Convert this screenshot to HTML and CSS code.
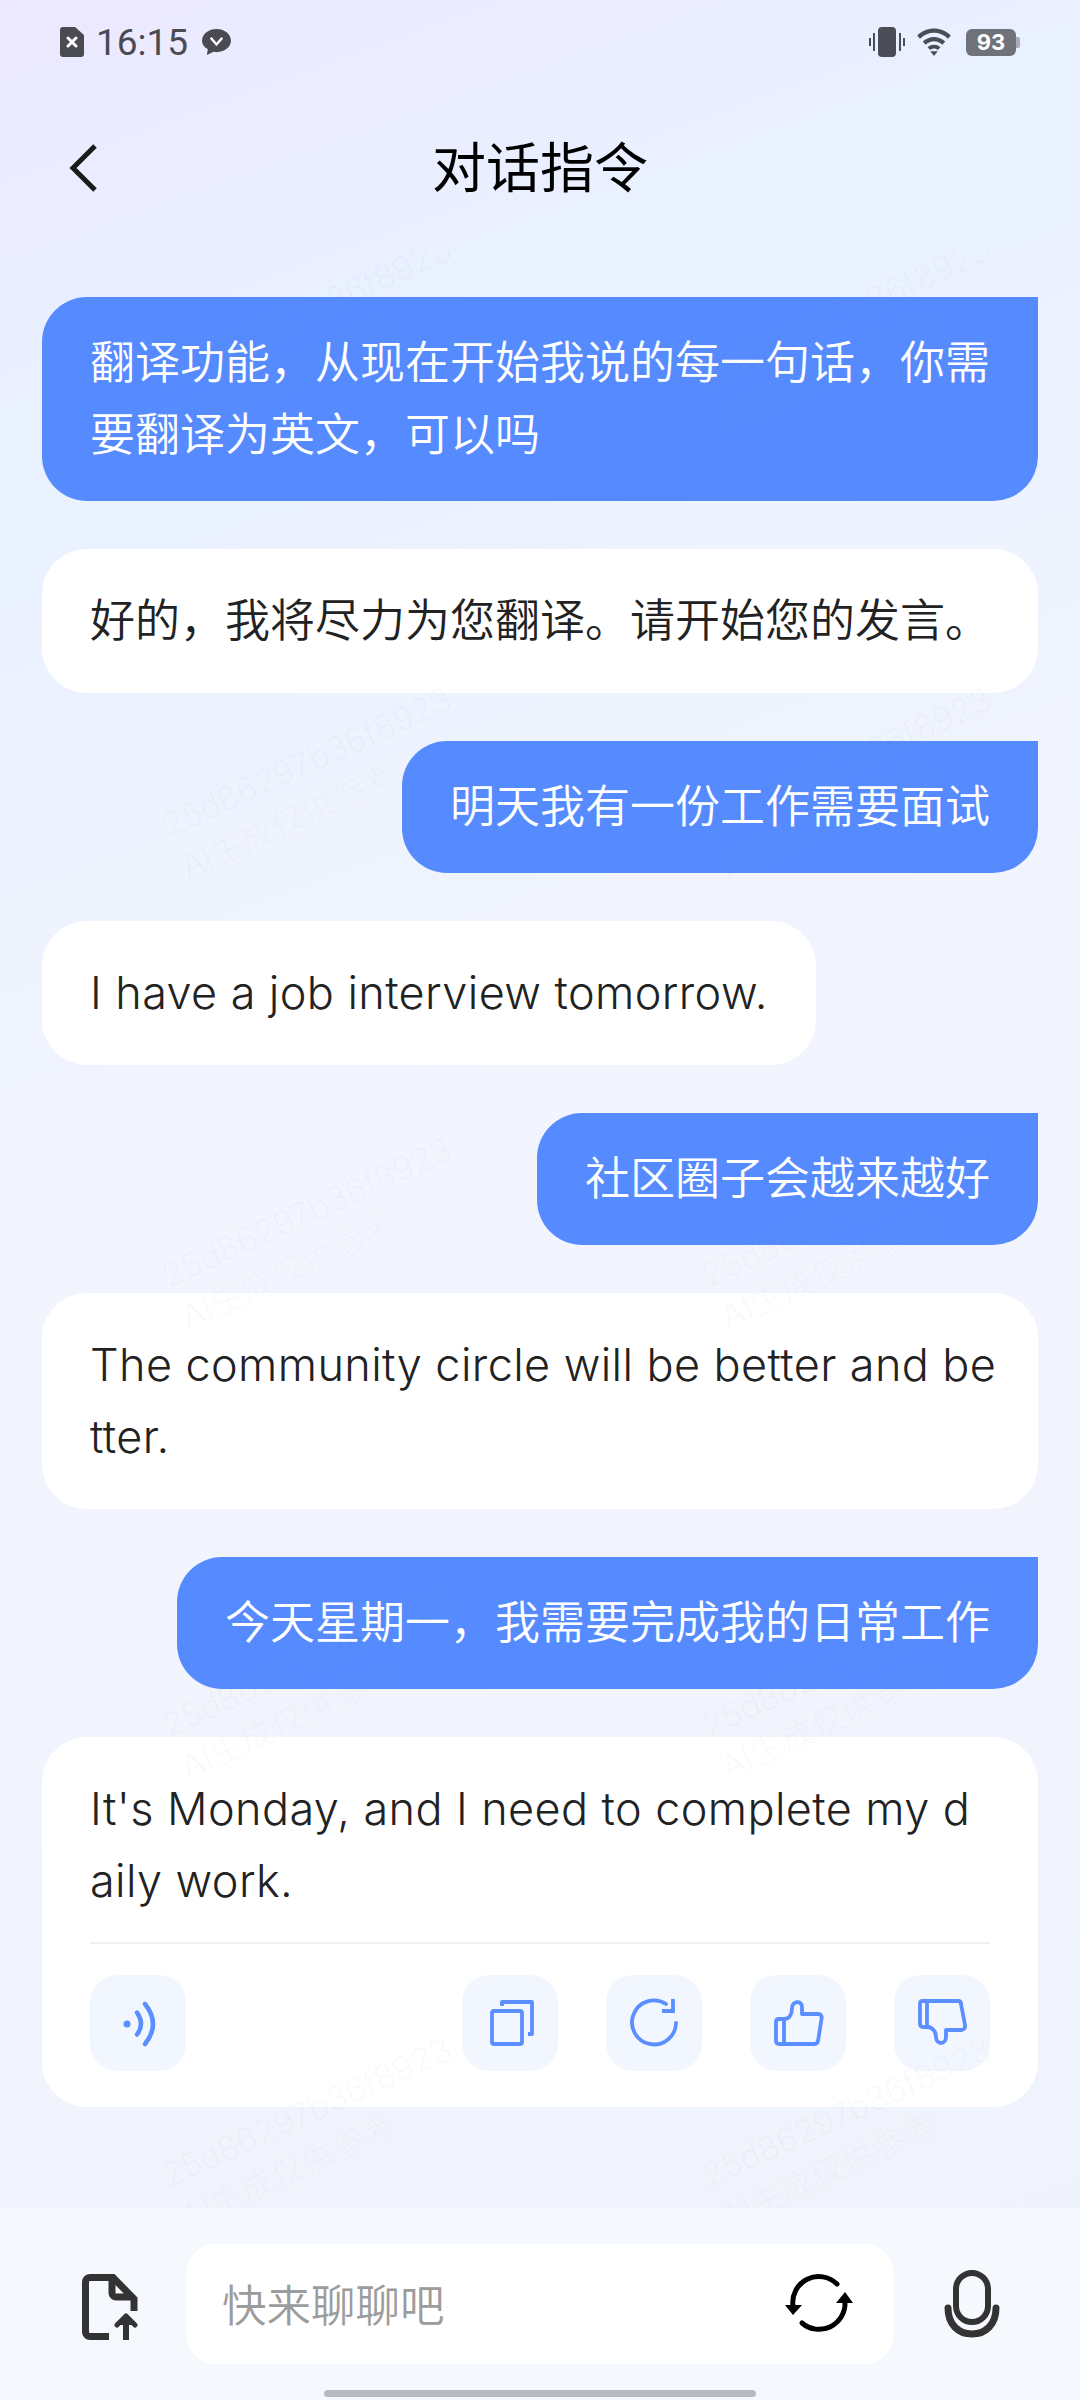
FILE: index.html
```html
<!DOCTYPE html>
<html lang="zh-CN">
<head>
<meta charset="utf-8">
<title>对话指令</title>
<link rel="stylesheet" href="styles.css">
</head>
<body>
<div class="phone">
  <div class="status">
    <div class="status-side">
      <svg class="ic-sim" viewBox="0 0 24 30"><path d="M3 0h12l9 8v19a3 3 0 0 1-3 3H3a3 3 0 0 1-3-3V3a3 3 0 0 1 3-3z" fill="#4a4a52"/><path d="M8 11l8 8M16 11l-8 8" stroke="#fff" stroke-width="3" stroke-linecap="round"/></svg>
      <span class="time">16:15</span>
      <svg class="ic-msg" viewBox="0 0 30 28"><path d="M15 0c8 0 15 5 15 12s-7 12-15 12c-1 0-2 0-3-.3L5 27l1-6C2 19 0 16 0 12 0 5 7 0 15 0z" fill="#4a4a52"/><path d="M9 9l6 7 6-7" fill="none" stroke="#fff" stroke-width="2.5"/></svg>
    </div>
    <div class="status-side">
      <svg class="ic-vib" viewBox="0 0 36 30"><rect x="9" y="0" width="18" height="30" rx="4" fill="#4a4d55"/><path d="M5 6v18M1 11v8M31 6v18M35 11v8" stroke="#4a4d55" stroke-width="2"/></svg>
      <svg class="ic-wifi" viewBox="0 0 36 30"><path d="M0 8c10-10 26-10 36 0l-3 3.500C24 3 12 3 3 11.500z" fill="#4a4d55"/><path d="M6 14.500c7-6.500 17-6.500 24 0l-3 3.500c-5-5-13-5-18 0z" fill="#4a4d55"/><path d="M11 20.500c4-3.500 10-3.500 14 0l-3 3c-2.500-2-5.500-2-8 0z" fill="#4a4d55"/><path d="M14 25h8l-4 5z" fill="#4a4d55"/></svg>
      <div class="batt"><span class="batt-num">93</span></div>
    </div>
  </div>
  <header class="head">
    <svg class="ic-back" viewBox="0 0 32 50"><path d="M28 3L6 25l22 22" fill="none" stroke="#1a1a1a" stroke-width="5"/></svg>
    <h1 class="title">对话指令</h1>
  </header>
  <main class="chat">
    <div class="msg user">翻译功能，从现在开始我说的每一句话，你需要翻译为英文，可以吗</div>
    <div class="msg bot">好的，我将尽力为您翻译。请开始您的发言。</div>
    <div class="msg user">明天我有一份工作需要面试</div>
    <div class="msg bot en">I have a job interview tomorrow.</div>
    <div class="msg user">社区圈子会越来越好</div>
    <div class="msg bot en roomy">The community circle will be better and better.</div>
    <div class="msg user">今天星期一，我需要完成我的日常工作</div>
    <div class="msg bot en last">
      <div>It's Monday, and I need to complete my daily work.</div>
      <div class="actions">
        <button class="act spk"><svg viewBox="0 0 48 48"><circle cx="13" cy="25" r="3.500" fill="#5b8eff"/><path d="M23 13.500Q31 25 23 35.500M31 5Q47 25 31 45" fill="none" stroke="#5b8eff" stroke-width="4.500" stroke-linecap="round"/></svg></button>
        <button class="act"><svg viewBox="0 0 48 48"><rect x="6" y="12" width="30" height="33" rx="2" fill="none" stroke="#5b8eff" stroke-width="3.800"/><path d="M16 7V3H46V35H42" fill="none" stroke="#5b8eff" stroke-width="3.800" stroke-linejoin="round"/></svg></button>
        <button class="act"><svg viewBox="0 0 48 48"><path d="M46 24A22 22 0 1 1 36 5" fill="none" stroke="#5b8eff" stroke-width="3.800" stroke-linecap="round"/><path d="M43 0V12H32" fill="none" stroke="#5b8eff" stroke-width="3.800"/></svg></button>
        <button class="act"><svg viewBox="0 0 48 48"><path d="M5 20H10C15 20 18 16 18 9C18 2 28 1 28 8V15H44C47 15 48 17 47.500 20L44 42C43.500 44 42 45 40 45H5C3 45 2 44 2 42V23C2 21 3 20 5 20ZM10 20V45" fill="none" stroke="#5b8eff" stroke-width="3.800" stroke-linejoin="round"/></svg></button>
        <button class="act"><svg viewBox="0 0 48 48"><path d="M4 2H40C42 2 43 3 43 5L47 26C47.500 29 46 31 43 31H28V38C28 46 18 46 18 38C18 32 14 28 9 28H5C3 28 2 27 2 25V4C2 3 3 2 4 2ZM9 2V28" fill="none" stroke="#5b8eff" stroke-width="3.800" stroke-linejoin="round"/></svg></button>
      </div>
    </div>
    <div class="marks" aria-hidden="true">
      <div class="mark"><span>25d86297b36f8923</span><span>AI生成仅供参考</span></div>
      <div class="mark"><span>25d86297b36f8923</span><span>AI生成仅供参考</span></div>
      <div class="mark"><span>25d86297b36f8923</span><span>AI生成仅供参考</span></div>
      <div class="mark"><span>25d86297b36f8923</span><span>AI生成仅供参考</span></div>
      <div class="mark"><span>25d86297b36f8923</span><span>AI生成仅供参考</span></div>
      <div class="mark"><span>25d86297b36f8923</span><span>AI生成仅供参考</span></div>
      <div class="mark"><span>25d86297b36f8923</span><span>AI生成仅供参考</span></div>
      <div class="mark"><span>25d86297b36f8923</span><span>AI生成仅供参考</span></div>
      <div class="mark"><span>25d86297b36f8923</span><span>AI生成仅供参考</span></div>
      <div class="mark"><span>25d86297b36f8923</span><span>AI生成仅供参考</span></div>
    </div>
  </main>
  <footer class="foot">
    <svg class="ic-file" viewBox="0 0 56 66"><path d="M27 62.500H8a4.500 4.500 0 0 1-4.500-4.500V8A4.500 4.500 0 0 1 8 3.500H31L52 25V37" fill="none" stroke="#333" stroke-width="7"/><path d="M30 3.500V19a4 4 0 0 0 4 4H51" fill="none" stroke="#333" stroke-width="7"/><path d="M44 66V44" stroke="#333" stroke-width="6"/><path d="M35 51L44 42L53 51" fill="#333" stroke="#333" stroke-width="5" stroke-linejoin="round" stroke-linecap="round"/></svg>
    <div class="input">
      <span class="ph">快来聊聊吧</span>
      <svg class="ic-sync" viewBox="0 0 70 60"><path d="M9 32A26 26 0 0 1 53 10" fill="none" stroke="#000" stroke-width="5" stroke-linecap="round"/><path d="M61 28A26 26 0 0 1 18 49" fill="none" stroke="#000" stroke-width="5" stroke-linecap="round"/><path d="M1 31H18L9 41ZM61 18L52 29H69Z" fill="#000"/></svg>
    </div>
    <svg class="ic-mic" viewBox="0 0 56 68"><rect x="12" y="3" width="32" height="49" rx="16" fill="none" stroke="#333" stroke-width="6"/><path d="M4 38C4 54 14 64 28 64C42 64 52 54 52 38" fill="none" stroke="#333" stroke-width="7" stroke-linecap="round"/></svg>
    <div class="home"></div>
  </footer>
</div>
</body>
</html>
```
FILE: styles.css
```css
* { box-sizing: border-box; }
html, body { margin: 0; padding: 0; }
body { width: 1080px; height: 2400px; overflow: hidden; font-family: "Inter", "Noto Sans CJK SC", sans-serif; }
.phone { width: 1080px; height: 2400px; display: flex; flex-direction: column; background: linear-gradient(160deg, #ece8ff 0%, #e9f1ff 16%, #f3f5fe 50%, #eff3fb 100%); position: relative; overflow: hidden; }
.status { height: 84px; padding: 0 64px 0 60px; display: flex; align-items: center; justify-content: space-between; }
.status-side { display: flex; align-items: center; }
.ic-sim { width: 24px; height: 30px; margin-right: 12px; }
.time { font-size: 37px; color: #4a4a52; line-height: 1; font-family: "Roboto", sans-serif; }
.ic-msg { width: 29px; height: 27px; margin-left: 14px; }
.ic-vib { width: 36px; height: 30px; margin-right: 11px; }
.ic-wifi { width: 36px; height: 28px; margin-right: 14px; }
.batt { width: 50px; height: 27px; background: #6f7279; border-radius: 6px; display: flex; align-items: center; justify-content: center; position: relative; }
.batt::after { content: ""; position: absolute; right: -4px; top: 8px; width: 4px; height: 11px; background: #a9acb3; border-radius: 0 2px 2px 0; }
.batt-num { color: #fff; font-size: 22px; font-weight: 700; }
.head { height: 168px; padding-bottom: 6px; display: flex; align-items: center; justify-content: center; position: relative; }
.ic-back { position: absolute; left: 67px; top: 59px; width: 32px; height: 50px; }
.title { margin: 0; font-size: 54px; font-weight: 400; color: #000; font-family: "Noto Sans CJK SC", sans-serif; line-height: 1.2; }
.chat { height: 1956px; padding: 45px 42px 0; display: flex; flex-direction: column; gap: 48px; align-items: flex-end; position: relative; overflow: hidden; }
.msg { font-size: 45px; line-height: 72px; max-width: 996px; word-break: break-all; font-weight: 350; }
.en { letter-spacing: 0.4px; }
.user { background: #568bff; color: #fff; padding: 30px 48px; border-radius: 45px 0 45px 45px; }
.bot { background: #fff; color: #222; padding: 36px 48px; border-radius: 45px; align-self: flex-start; }
.roomy { padding-right: 38px; width: 996px; }
.last { width: 996px; }
.actions { margin-top: 25px; padding-top: 31px; border-top: 2px solid #eef0f3; display: flex; gap: 48px; justify-content: flex-end; }
.act { width: 96px; height: 96px; border: 0; padding: 24px; border-radius: 27px; background: #f2f7ff; display: flex; }
.act svg { width: 48px; height: 48px; overflow: visible; }
.spk { margin-right: auto; }
.marks { position: absolute; left: 46px; top: -144px; display: grid; grid-template-columns: 540px 540px; grid-auto-rows: 450px; pointer-events: none; }
.mark { display: grid; place-content: center; justify-items: start; transform: rotate(-24.500deg); color: rgba(60, 70, 100, 0.035); font-size: 33.500px; line-height: 46px; font-weight: 300; }
.foot { height: 192px; background: #f5f8fd; display: flex; align-items: center; padding: 0 0 0 82px; position: relative; z-index: 1; }
.ic-file { width: 56px; height: 66px; margin-right: 48px; margin-top: 6px; }
.input { width: 708px; height: 120px; background: #fff; border-radius: 30px; padding: 0 40px 0 36px; display: flex; align-items: center; justify-content: space-between; }
.ph { color: #9c9c9c; font-size: 44.500px; font-family: "Noto Sans CJK SC", sans-serif; font-weight: 350; padding-bottom: 4px; }
.ic-sync { width: 70px; height: 60px; }
.ic-mic { width: 56px; height: 68px; margin-left: 50px; }
.home { position: absolute; left: 324px; top: 182px; width: 432px; height: 7px; border-radius: 4px; background: #b8babf; }
```
